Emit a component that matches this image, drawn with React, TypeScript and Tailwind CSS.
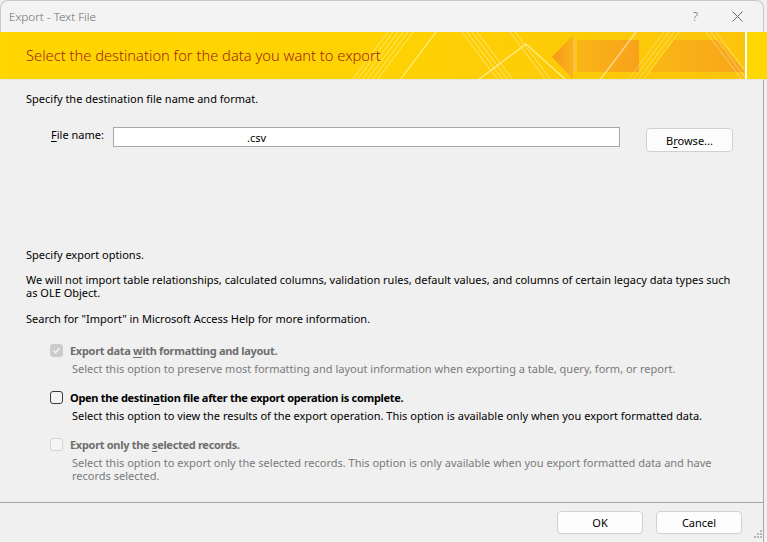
import React from "react";

const font = { fontFamily: '"Noto Sans", "Open Sans", Arial, sans-serif' };

function Banner() {
  return (
    <div className="h-[48px] w-[767px] shrink-0 border-b border-[#e4e4e4] relative overflow-hidden">
      <svg width="767" height="48" viewBox="0 0 767 48" className="absolute inset-0">
        <defs>
          <linearGradient id="bg" x1="0" y1="0" x2="1" y2="0">
            <stop offset="0" stopColor="#ffd600" />
            <stop offset="0.5" stopColor="#fed203" />
            <stop offset="1" stopColor="#fbc40c" />
          </linearGradient>
          <linearGradient id="or" x1="0" y1="0" x2="1" y2="0">
            <stop offset="0" stopColor="#f6951c" />
            <stop offset="1" stopColor="#f9b31a" />
          </linearGradient>
          <linearGradient id="or2" x1="0" y1="0" x2="1" y2="0">
            <stop offset="0" stopColor="#fab516" />
            <stop offset="1" stopColor="#f7a21b" />
          </linearGradient>
        </defs>
        <rect width="767" height="48" fill="url(#bg)" />
        <g stroke="#fff" strokeOpacity="0.45" strokeWidth="1">
          <line x1="352" y1="48" x2="388" y2="0" />
          <line x1="357" y1="48" x2="393" y2="0" />
          <line x1="362" y1="48" x2="398" y2="0" />
          <line x1="367" y1="48" x2="403" y2="0" />
          <line x1="372" y1="48" x2="408" y2="0" />
          <line x1="377" y1="48" x2="413" y2="0" />
        </g>
        <line x1="400" y1="48" x2="436" y2="0" stroke="#fff38a" strokeOpacity="0.9" strokeWidth="1.2" />
        <g stroke="#fff" strokeOpacity="0.45" strokeWidth="1">
          <line x1="462" y1="0" x2="498" y2="48" />
          <line x1="467" y1="0" x2="503" y2="48" />
          <line x1="472" y1="0" x2="508" y2="48" />
          <line x1="477" y1="0" x2="513" y2="48" />
          <line x1="510" y1="0" x2="546" y2="48" />
          <line x1="515" y1="0" x2="551" y2="48" />
        </g>
        <polyline points="478,48 526,12 566,48" fill="none" stroke="#fff6b0" strokeOpacity="0.85" strokeWidth="1.2" />
        <polygon points="552,25 573,3 573,47" fill="url(#or)" opacity="0.95" />
        <rect x="573" y="8" width="3" height="32" fill="#fcc23a" />
        <rect x="577" y="8" width="62" height="32" fill="url(#or2)" />
        <line x1="600" y1="48" x2="636" y2="0" stroke="#fff" strokeOpacity="0.5" strokeWidth="1.5" />
        <g stroke="#fff" strokeOpacity="0.35" strokeWidth="1">
          <line x1="628" y1="48" x2="664" y2="0" />
          <line x1="633" y1="48" x2="669" y2="0" />
          <line x1="638" y1="48" x2="674" y2="0" />
          <line x1="643" y1="48" x2="679" y2="0" />
        </g>
        <polygon points="650,40 674,8 718,8 745,40" fill="url(#or2)" opacity="0.9" />
        <g stroke="#fff" strokeOpacity="0.4" strokeWidth="1">
          <line x1="706" y1="0" x2="742" y2="48" />
          <line x1="711" y1="0" x2="747" y2="48" />
          <line x1="716" y1="0" x2="752" y2="48" />
        </g>
        <rect x="745" y="0" width="22" height="48" fill="#ffd700" />
        <rect x="745" y="0" width="2" height="48" fill="#ffffff" />
      </svg>
      <div className="relative h-full flex items-center pl-[26px] pb-[1px]">
        <span className="text-[14.7px] text-[#a3250c] font-light" style={font}>
          Select the destination for the data you want to export
        </span>
      </div>
    </div>
  );
}

function Check({ kind }: { kind: "disabledChecked" | "normal" | "disabled" }) {
  if (kind === "disabledChecked") {
    return (
      <div className="w-[13px] h-[13px] rounded-[3px] bg-[#cbcbcb] flex items-center justify-center shrink-0">
        <svg width="9" height="9" viewBox="0 0 9 9">
          <path d="M1.5 4.6 L3.6 6.6 L7.6 2.2" fill="none" stroke="#fff" strokeWidth="1.2" />
        </svg>
      </div>
    );
  }
  if (kind === "normal") {
    return <div className="w-[13px] h-[13px] rounded-[3px] border border-[#3b3b3b] bg-[#f4f4f4] shrink-0" />;
  }
  return <div className="w-[13px] h-[13px] rounded-[3px] border border-[#d3d3d3] bg-[#f5f5f5] shrink-0" />;
}

function Option({
  kind,
  label,
  desc,
  disabled,
}: {
  kind: "disabledChecked" | "normal" | "disabled";
  label: React.ReactNode;
  desc: React.ReactNode;
  disabled: boolean;
}) {
  return (
    <div className="flex flex-col ml-[24px]">
      <div className="flex items-center gap-[7px]">
        <Check kind={kind} />
        <span className={"font-bold tracking-[-0.3px] " + (disabled ? "text-[#6e6e6e]" : "text-black")}>{label}</span>
      </div>
      <div className={"mt-[5px] ml-[22px] pr-[40px] " + (disabled ? "text-[#7a7a7a]" : "text-black")}>{desc}</div>
    </div>
  );
}

export default function App() {
  return (
    <div
      className="w-[767px] h-[542px] bg-[#f0f0f0] flex flex-col overflow-hidden relative text-[11px] leading-[13px] text-black"
      style={font}
    >
      <div className="h-[32px] w-[764px] shrink-0 bg-[#f3f3f3] rounded-t-[8px] border-t border-l border-r border-[#c9c9c9] flex items-center pb-[1px]">
        <span className="pl-[8px] text-[11.7px] text-[#6a6a6a] font-light">Export - Text File</span>
        <div className="flex-1" />
        <span className="text-[13px] text-[#6a6a6a] mr-[34px] font-light">?</span>
        <svg width="11" height="11" viewBox="0 0 11 11" className="mr-[20px]">
          <path d="M0.5 0.5 L10.5 10.5 M10.5 0.5 L0.5 10.5" stroke="#6a6a6a" strokeWidth="1" />
        </svg>
      </div>

      <Banner />

      <div className="w-[764px] flex-1 border-r border-[#a9a9a9] flex flex-col pl-[26px] pt-[12px]">
        <div>Specify the destination file name and format.</div>

        <div className="flex items-start mt-[22px]">
          <div className="ml-[25px] w-[62px] mt-[1px]">
            <span className="underline underline-offset-2">F</span>ile name:
          </div>
          <div className="w-[507px] h-[20px] bg-white border border-[#a8a8a8] flex items-center pl-[133px]">
            .csv
          </div>
          <button className="ml-[26px] mt-[1px] w-[87px] h-[24px] bg-[#fdfdfd] border border-[#d0d0d0] rounded-[4px] flex items-center justify-center text-[11px]">
            <span>
              B<span className="underline underline-offset-2">r</span>owse...
            </span>
          </button>
        </div>

        <div className="mt-[96px]">Specify export options.</div>
        <div className="mt-[12px] pr-[30px]">
          We will not import table relationships, calculated columns, validation rules, default values, and columns of
          certain legacy data types such as OLE Object.
        </div>
        <div className="mt-[13px]">Search for "Import" in Microsoft Access Help for more information.</div>

        <div className="mt-[19px] flex flex-col gap-[16px]">
          <Option
            kind="disabledChecked"
            disabled
            label={
              <>
                Export data <span className="underline underline-offset-2">w</span>ith formatting and layout.
              </>
            }
            desc="Select this option to preserve most formatting and layout information when exporting a table, query, form, or report."
          />
          <Option
            kind="normal"
            disabled={false}
            label={
              <>
                Open the destin<span className="underline underline-offset-2">a</span>tion file after the export
                operation is complete.
              </>
            }
            desc="Select this option to view the results of the export operation. This option is available only when you export formatted data."
          />
          <Option
            kind="disabled"
            disabled
            label={
              <>
                Export only the <span className="underline underline-offset-2">s</span>elected records.
              </>
            }
            desc="Select this option to export only the selected records. This option is only available when you export formatted data and have records selected."
          />
        </div>
      </div>

      <div className="w-[764px] h-[40px] shrink-0 border-t border-[#a3a3a3] border-r border-r-[#a9a9a9] flex justify-end items-start pr-[21px] pt-[8px] gap-[13px]">
        <button className="w-[86px] h-[23px] bg-[#fdfdfd] border border-[#d0d0d0] rounded-[4px] text-[11px]">OK</button>
        <button className="w-[86px] h-[23px] bg-[#fdfdfd] border border-[#d0d0d0] rounded-[4px] text-[11px]">Cancel</button>
      </div>

      <svg width="10" height="10" viewBox="0 0 10 10" className="absolute right-[5px] bottom-[2px]">
        <g fill="#b8b8b8">
          <rect x="8" y="0" width="2" height="2" />
          <rect x="5" y="3" width="2" height="2" />
          <rect x="8" y="3" width="2" height="2" />
          <rect x="2" y="6" width="2" height="2" />
          <rect x="5" y="6" width="2" height="2" />
          <rect x="8" y="6" width="2" height="2" />
        </g>
      </svg>
    </div>
  );
}
